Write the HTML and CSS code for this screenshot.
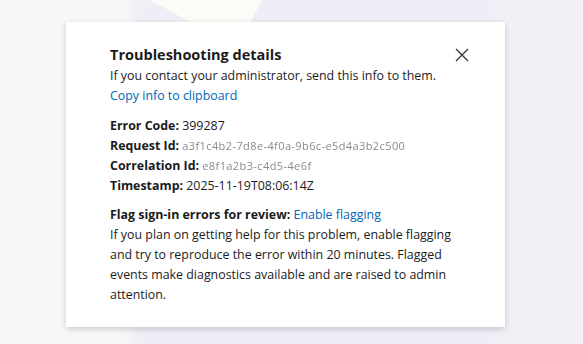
FILE: index.html
```html
<!DOCTYPE html>
<html>
<head>
<meta charset="utf-8">
<link rel="stylesheet" href="styles.css">
</head>
<body>
<div class="bg-shape"></div>
<div class="card">
  <div class="head">
    <div class="title">Troubleshooting details</div>
    <button class="close" aria-label="Close">
      <svg width="14" height="14" viewBox="0 0 14 14"><path d="M1 1L13 13M13 1L1 13" stroke="#323130" stroke-width="1.2" fill="none"/></svg>
    </button>
  </div>
  <div class="line">If you contact your administrator, send this info to them.</div>
  <div class="line"><a class="link" href="#">Copy info to clipboard</a></div>
  <div class="details">
    <div class="line"><b>Error Code:</b> 399287</div>
    <div class="line"><b>Request Id:</b> <span class="blur">a3f1c4b2-7d8e-4f0a-9b6c-e5d4a3b2c500</span></div>
    <div class="line"><b>Correlation Id:</b> <span class="blur">e8f1a2b3-c4d5-4e6f</span></div>
    <div class="line"><b>Timestamp:</b> 2025-11-19T08:06:14Z</div>
  </div>
  <div class="flag">
    <div class="line"><b>Flag sign-in errors for review:</b> <a class="link" href="#">Enable flagging</a></div>
    <div class="para">If you plan on getting help for this problem, enable flagging and try to reproduce the error within 20 minutes. Flagged events make diagnostics available and are raised to admin attention.</div>
  </div>
</div>
</body>
</html>
```
FILE: styles.css
```css
html, body {
  margin: 0;
  padding: 0;
  width: 583px;
  height: 344px;
  overflow: hidden;
}
body {
  background: linear-gradient(90deg, #f7f7fa 0, #f7f7fa 125px, #efedf6 140px, #efedf6 490px, #f2f0f6 510px, #f2f0f6 100%);
  font-family: "Open Sans", "Segoe UI", sans-serif;
  color: #1b1b1b;
  position: relative;
  padding-top: 22px;
  box-sizing: border-box;
}
.bg-shape {
  position: absolute;
  left: 150px;
  top: 0;
  width: 112px;
  height: 22px;
  background: #fbfbf7;
  clip-path: polygon(0 0, 100% 0, 90% 100%, 36% 100%);
}
.card {
  position: relative;
  margin-left: 66px;
  width: 439px;
  height: 305px;
  box-sizing: border-box;
  background: #fff;
  box-shadow: 0 2px 6px rgba(0,0,0,0.18);
  padding: 22px 32px 0 44px;
  font-size: 12.4px;
  line-height: 20px;
}
.head {
  display: flex;
  justify-content: space-between;
  align-items: center;
}
.title {
  font-size: 14.5px;
  font-weight: 700;
  line-height: 22px;
  color: #1b1b1b;
}
.close {
  border: 0;
  background: none;
  padding: 0;
  width: 16px;
  height: 16px;
  display: flex;
  align-items: center;
  justify-content: center;
  margin-right: 3px;
}
.line { white-space: nowrap; }
.link { color: #0067b8; text-decoration: none; }
.details { margin-top: 10px; }
.details b, .flag b { font-weight: 700; }
.blur {
  color: #8a8a8a;
  filter: blur(0.6px);
  font-size: 11px;
  letter-spacing: 0.4px;
}
.flag { margin-top: 9px; }
.para { width: 350px; }
```
